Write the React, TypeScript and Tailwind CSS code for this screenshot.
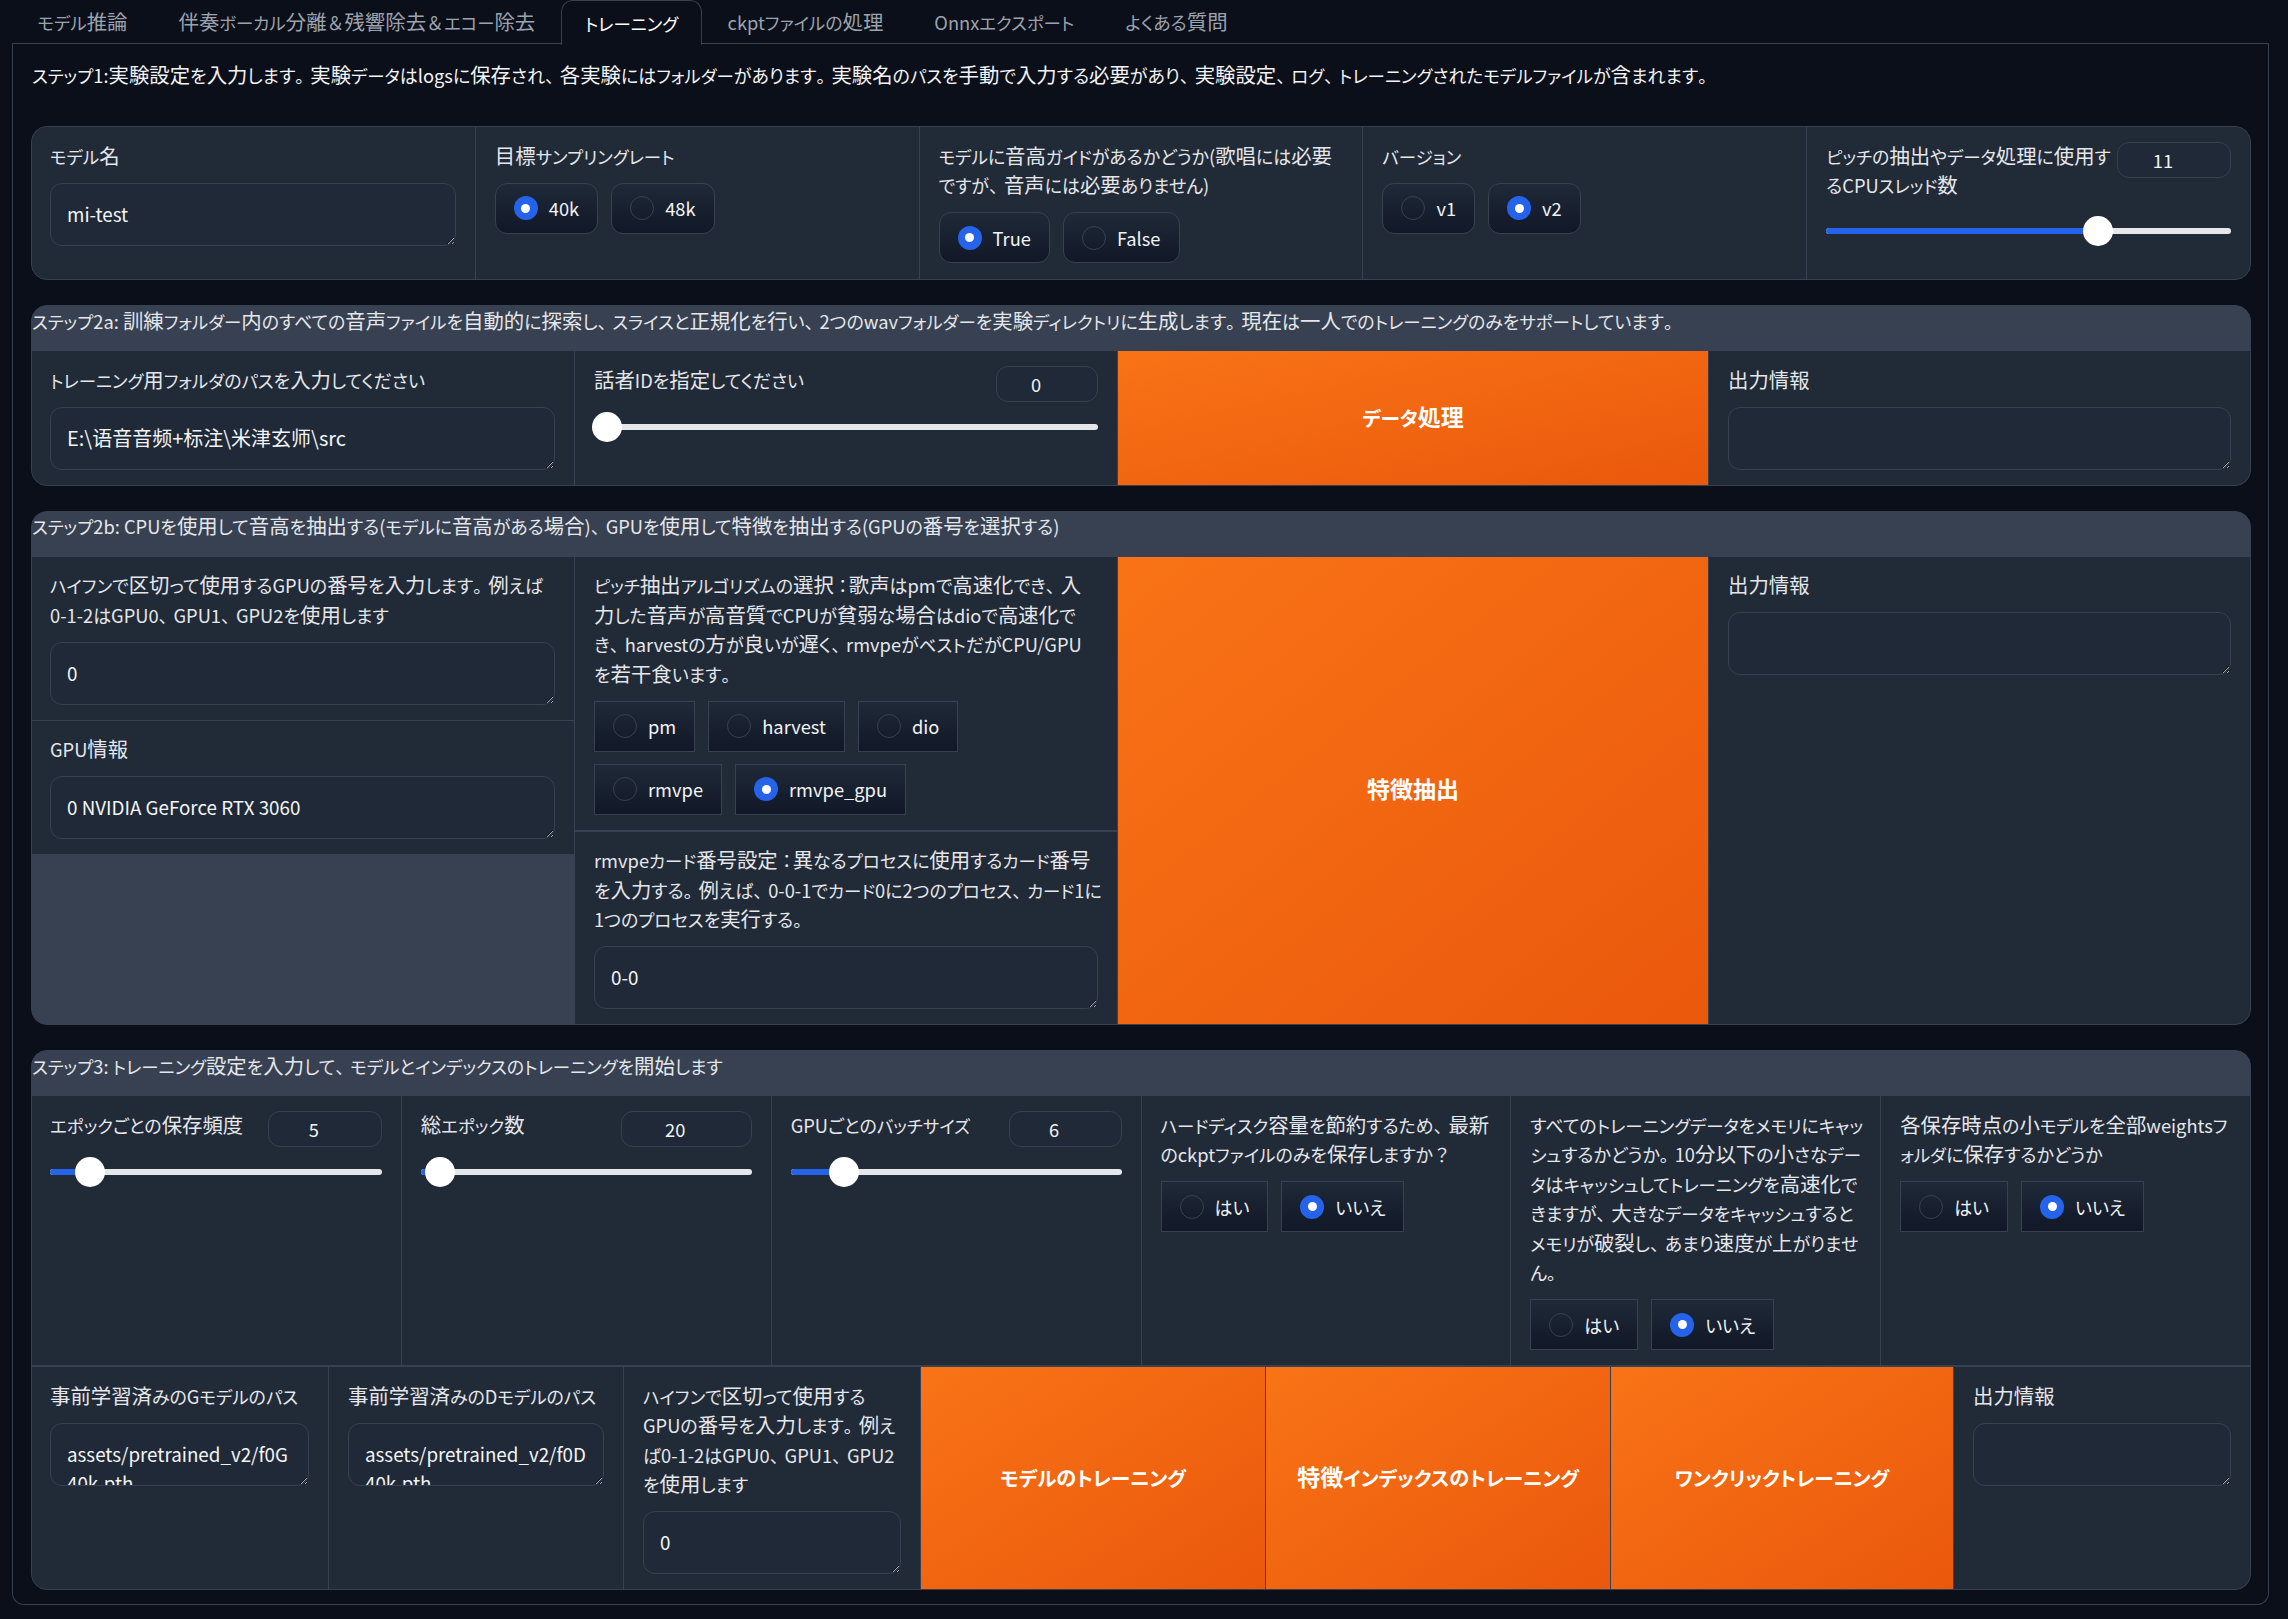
const tabs = ["モデル推論", "伴奏ボーカル分離＆残響除去＆エコー除去", "トレーニング", "ckptファイルの処理", "Onnxエクスポート", "よくある質問"];

// latin and kana sit at a smaller size than the kanji around them, punctuation keeps most of its width
const T = ({ children }: { children: string }) => (
  <>
    {children.split(/(\n|[\x20-\x7e]+|[、。：？＆]+|[\u3040-\u309f]+|[\u30a0-\u30ff]+)/).map((part, i) => {
      if (!part) return null;
      if (part === "\n") return <br key={i} />;
      const c = part.charCodeAt(0);
      if (c < 0x80) return <span key={i} className="whitespace-nowrap text-[0.897em] leading-[0]">{part}</span>;
      if (part[0] === "＆") return <span key={i} className="text-[0.88em] leading-[0] [font-feature-settings:normal]">{part}</span>;
      if ("、。：？".includes(part[0])) return <span key={i} className="text-[0.88em] leading-[0] tracking-[-3px] [font-feature-settings:normal]">{part}</span>;
      if (c >= 0x3040 && c < 0x30a0) return <span key={i} className="text-[0.88em] leading-[0]">{part}</span>;
      if (c >= 0x30a0 && c < 0x3100) return <span key={i} className="text-[0.855em] leading-[0]">{part}</span>;
      return <span key={i}>{part}</span>;
    })}
  </>
);

const Cell = ({ children, className = "" }: { children?: React.ReactNode; className?: string }) => (
  <div className={`bg-[#212a37] pt-[15px] pb-[15px] pl-[19px] pr-[19px] first:pl-[18px] ${className}`}>{children}</div>
);

const Label = ({ children, className = "" }: { children: string; className?: string }) => (
  <div className={`-mt-[1.5px] mb-[12.5px] text-[#e5e7eb] ${className}`}>
    <T>{children}</T>
  </div>
);

const TextBox = ({ value = "", size = "text-[18.8px]" }: { value?: string; size?: string }) => (
  <textarea
    readOnly
    defaultValue={value}
    className={`block h-[63px] w-full resize-y overflow-hidden break-all rounded-xl border border-[#374151] bg-[#1f2937] px-4 py-[15px] text-[#f3f4f6] outline-none ${size}`}
  />
);

const Radio = ({ label, checked, rounded }: { label: string; checked?: boolean; rounded?: boolean }) => (
  <div
    className={`flex h-[51px] items-center gap-[11px] border border-[#374151] bg-gradient-to-b from-[#1f2937] to-[#111827] px-[18px] text-[#f3f4f6] ${rounded ? "rounded-xl" : ""}`}
  >
    {checked ? (
      <span className="flex h-6 w-6 items-center justify-center rounded-full bg-[#2563eb]">
        <span className="h-[9px] w-[9px] rounded-full bg-white" />
      </span>
    ) : (
      <span className="h-6 w-6 rounded-full border border-[#374151]" />
    )}
    <span>
      <T>{label}</T>
    </span>
  </div>
);

const NumberBox = ({ value, width }: { value: number; width: string }) => (
  <input
    type="number"
    readOnly
    defaultValue={value}
    className={`h-[36px] shrink-0 rounded-xl border border-[#374151] bg-[#1f2937] pr-[7px] text-center text-[18.3px] text-[#f3f4f6] outline-none ${width}`}
  />
);

const Slider = ({ percent, className = "" }: { percent: number; className?: string }) => (
  <div className={`relative flex h-[30px] items-center ${className}`}>
    <div className="relative h-[6px] w-full overflow-hidden rounded-full bg-[#e5e7eb]">
      <div className="h-full bg-[#2563eb]" style={{ width: `${percent}%` }} />
    </div>
    <div
      className="absolute h-[30px] w-[30px] -translate-x-1/2 rounded-full bg-white"
      style={{ left: `${percent}%` }}
    />
  </div>
);

const SliderCell = ({ label, value, percent, width }: { label: string; value: number; percent: number; width: string }) => (
  <Cell>
    <div className="flex items-start justify-between gap-2">
      <div className="-mt-[1.5px] text-[#e5e7eb]">
        <T>{label}</T>
      </div>
      <NumberBox value={value} width={width} />
    </div>
    <Slider percent={percent} className="mt-[10px]" />
  </Cell>
);

const ActionButton = ({ children }: { children: string }) => (
  <div className="flex items-center justify-center bg-gradient-to-br from-[#f97316] to-[#ea580c] pb-[3px] text-[23px] font-semibold text-white">
    <span>
      <T>{children}</T>
    </span>
  </div>
);

const Section = ({ title, children }: { title?: string; children: React.ReactNode }) => (
  <section className="flex flex-col gap-px overflow-hidden rounded-2xl border border-[#374151] bg-[#374151]">
    {title && (
      <div className="-mt-px mb-px h-[44px] pt-[0.5px] text-[#e5e7eb]">
        <T>{title}</T>
      </div>
    )}
    {children}
  </section>
);

const YesNo = () => (
  <div className="flex gap-[13px]">
    <Radio label="はい" />
    <Radio label="いいえ" checked />
  </div>
);

export default function App() {
  return (
    <div className="min-h-screen bg-[#0b0f19] pl-3 pr-[19px] text-[20.4px] leading-[29.5px] [font-family:'Noto_Sans_CJK_JP','Noto_Sans',sans-serif] [font-feature-settings:'palt']">
      <div className="flex h-[44px] border-b border-[#374151]">
        {tabs.map((t) =>
          t === "トレーニング" ? (
            <div
              key={t}
              className="-mb-px flex h-[45px] items-center rounded-t-xl border border-b-0 border-[#374151] bg-[#0b0f19] px-[23px] text-white"
            >
              <span>
                <T>{t}</T>
              </span>
            </div>
          ) : (
            <div key={t} className="flex items-center px-[25.5px] text-[#9ca3af]">
              <span>
                <T>{t}</T>
              </span>
            </div>
          )
        )}
      </div>

      <div className="flex flex-col gap-[25px] rounded-b-xl border border-t-0 border-[#374151] pb-[14px] pl-[18px] pr-[17px] pt-[15.5px]">
        <p className="mb-[12px] pl-px text-[#f3f4f6]">
          <T>ステップ1:実験設定を入力します。実験データはlogsに保存され、各実験にはフォルダーがあります。実験名のパスを手動で入力する必要があり、実験設定、ログ、トレーニングされたモデルファイルが含まれます。</T>
        </p>

        <Section>
          <div className="grid grid-cols-5 gap-px">
            <Cell className="!pb-[16px]">
              <Label>モデル名</Label>
              <TextBox value="mi-test" />
            </Cell>
            <Cell className="!pb-[16px]">
              <Label>目標サンプリングレート</Label>
              <div className="flex gap-[13px]">
                <Radio label="40k" checked rounded />
                <Radio label="48k" rounded />
              </div>
            </Cell>
            <Cell className="!pb-[16px]">
              <Label>モデルに音高ガイドがあるかどうか(歌唱には必要ですが、音声には必要ありません)</Label>
              <div className="flex gap-[13px]">
                <Radio label="True" checked rounded />
                <Radio label="False" rounded />
              </div>
            </Cell>
            <Cell className="!pb-[16px]">
              <Label>バージョン</Label>
              <div className="flex gap-[13px]">
                <Radio label="v1" rounded />
                <Radio label="v2" checked rounded />
              </div>
            </Cell>
            <Cell className="!pb-[16px]">
              <div className="flex items-start gap-[4px]">
                <div className="-mt-[1.5px] text-[#e5e7eb]">
                  <T>ピッチの抽出やデータ処理に使用するCPUスレッド数</T>
                </div>
                <NumberBox value={11} width="w-[114px]" />
              </div>
              <Slider percent={67.2} className="mt-[16.5px]" />
            </Cell>
          </div>
        </Section>

        <Section title="ステップ2a: 訓練フォルダー内のすべての音声ファイルを自動的に探索し、スライスと正規化を行い、2つのwavフォルダーを実験ディレクトリに生成します。現在は一人でのトレーニングのみをサポートしています。">
          <div className="grid grid-cols-[542px_542px_590px_1fr] gap-px">
            <Cell>
              <Label>トレーニング用フォルダのパスを入力してください</Label>
              <TextBox value="E:\语音音频+标注\米津玄师\src" size="text-[20px]" />
            </Cell>
            <SliderCell label="話者IDを指定してください" value={0} percent={2.6} width="w-[102px]" />
            <ActionButton>データ処理</ActionButton>
            <Cell>
              <Label>出力情報</Label>
              <TextBox />
            </Cell>
          </div>
        </Section>

        <Section title="ステップ2b: CPUを使用して音高を抽出する(モデルに音高がある場合)、GPUを使用して特徴を抽出する(GPUの番号を選択する)">
          <div className="grid grid-cols-[542px_542px_590px_1fr] gap-px">
            <div className="flex flex-col gap-px self-start">
              <Cell>
                <Label>ハイフンで区切って使用するGPUの番号を入力します。例えば0-1-2はGPU0、GPU1、GPU2を使用します</Label>
                <TextBox value="0" />
              </Cell>
              <Cell className="!pl-[18px]">
                <Label>GPU情報</Label>
                <TextBox value="0 NVIDIA GeForce RTX 3060" />
              </Cell>
            </div>
            <div className="flex flex-col gap-[2px]">
              <Cell className="!pl-[19px]">
                <Label>ピッチ抽出アルゴリズムの選択：歌声はpmで高速化でき、入力した音声が高音質でCPUが貧弱な場合はdioで高速化でき、harvestの方が良いが遅く、rmvpeがベストだがCPU/GPUを若干食います。</Label>
                <div className="flex flex-wrap gap-x-[13px] gap-y-[12px] pr-[100px]">
                  <Radio label="pm" />
                  <Radio label="harvest" />
                  <Radio label="dio" />
                  <Radio label="rmvpe" />
                  <Radio label="rmvpe_gpu" checked />
                </div>
              </Cell>
              <Cell className="!pl-[19px]">
                <Label className="-mr-[18px]">{"rmvpeカード番号設定：異なるプロセスに使用するカード番号\nを入力する。例えば、0-0-1でカード0に2つのプロセス、カード1に\n1つのプロセスを実行する。"}</Label>
                <TextBox value="0-0" />
              </Cell>
            </div>
            <ActionButton>特徴抽出</ActionButton>
            <Cell>
              <Label>出力情報</Label>
              <TextBox />
            </Cell>
          </div>
        </Section>

        <Section title="ステップ3: トレーニング設定を入力して、モデルとインデックスのトレーニングを開始します">
          <div className="grid grid-cols-6 gap-px pb-px">
            <SliderCell label="エポックごとの保存頻度" value={5} percent={12} width="w-[114px]" />
            <SliderCell label="総エポック数" value={20} percent={5.7} width="w-[131px]" />
            <SliderCell label="GPUごとのバッチサイズ" value={6} percent={16} width="w-[113px]" />
            <Cell>
              <Label>ハードディスク容量を節約するため、最新のckptファイルのみを保存しますか？</Label>
              <YesNo />
            </Cell>
            <Cell>
              <Label className="-mr-[18px]">{"すべてのトレーニングデータをメモリにキャッ\nシュするかどうか。10分以下の小さなデー\nタはキャッシュしてトレーニングを高速化で\nきますが、大きなデータをキャッシュすると\nメモリが破裂し、あまり速度が上がりませ\nん。"}</Label>
              <YesNo />
            </Cell>
            <Cell>
              <Label>各保存時点の小モデルを全部weightsフォルダに保存するかどうか</Label>
              <YesNo />
            </Cell>
          </div>
          <div className="grid grid-cols-[296px_294px_296px_344px_344px_342px_1fr] gap-px">
            <Cell>
              <Label>事前学習済みのGモデルのパス</Label>
              <TextBox value="assets/pretrained_v2/f0G40k.pth" />
            </Cell>
            <Cell>
              <Label>事前学習済みのDモデルのパス</Label>
              <TextBox value="assets/pretrained_v2/f0D40k.pth" />
            </Cell>
            <Cell>
              <Label>ハイフンで区切って使用するGPUの番号を入力します。例えば0-1-2はGPU0、GPU1、GPU2を使用します</Label>
              <TextBox value="0" />
            </Cell>
            <ActionButton>モデルのトレーニング</ActionButton>
            <ActionButton>特徴インデックスのトレーニング</ActionButton>
            <ActionButton>ワンクリックトレーニング</ActionButton>
            <Cell>
              <Label>出力情報</Label>
              <TextBox />
            </Cell>
          </div>
        </Section>
      </div>
    </div>
  );
}
